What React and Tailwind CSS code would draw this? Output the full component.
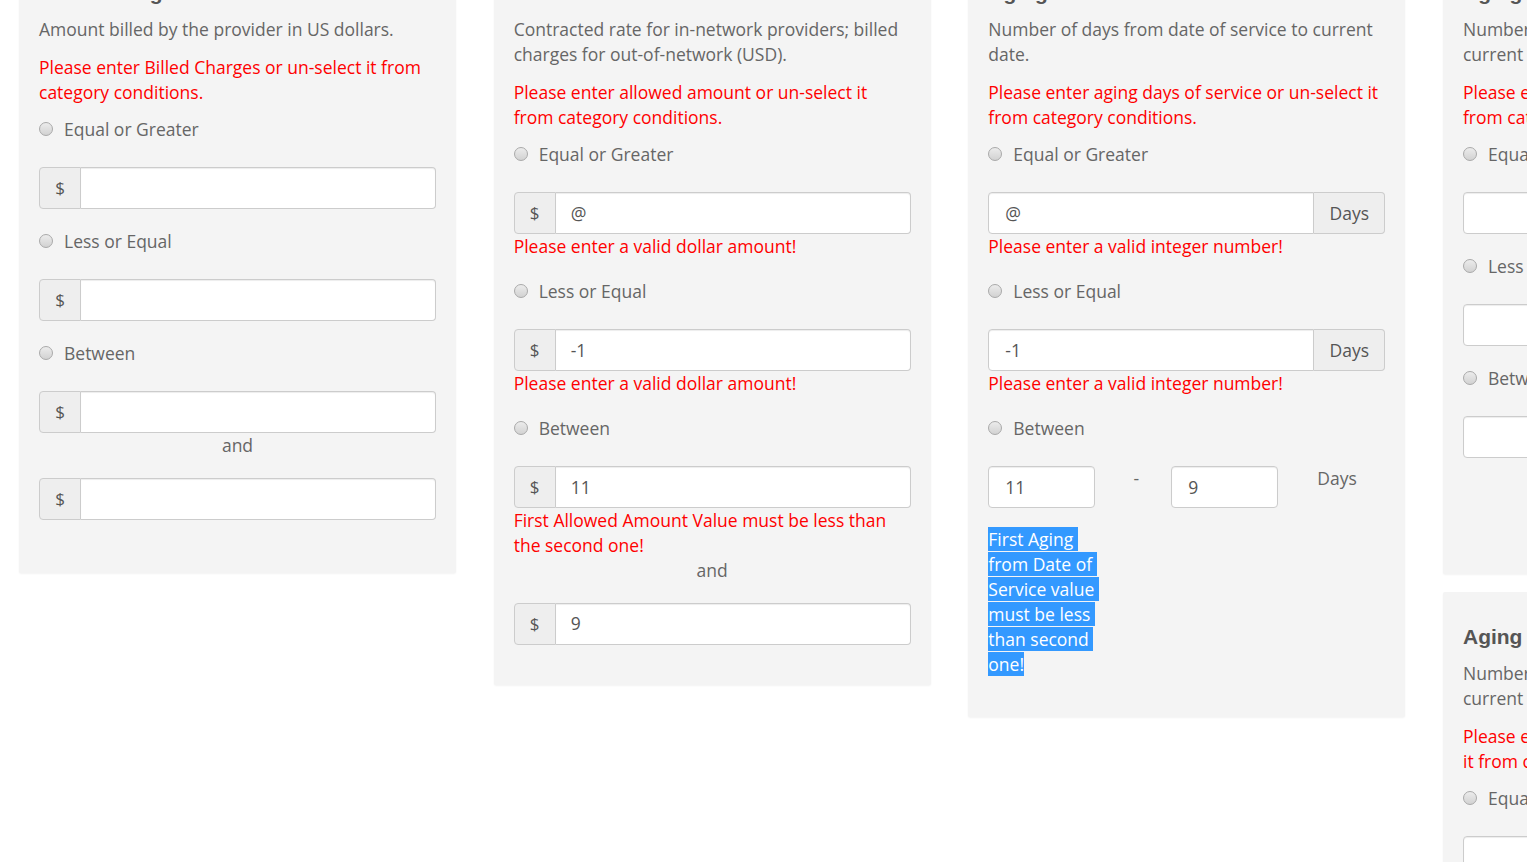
import React from "react";

const Radio = ({ label, className = "" }) => (
  <div className={"flex items-center h-[25px] " + className}>
    <span className="w-[14px] h-[14px] rounded-full border border-[#a9a9a9] bg-linear-to-b from-[#ececec] to-[#d2d2d2] shrink-0" />
    <span className="ml-[11px] leading-[25px]">{label}</span>
  </div>
);

const DollarInput = ({ value = "", className = "" }) => (
  <div className={"flex h-[42px] " + className}>
    <span className="w-[42px] shrink-0 flex items-center justify-center bg-[#eeeeee] border border-[#cccccc] rounded-l-[4px] text-[#555555] text-[17px]">
      $
    </span>
    <div className="flex-1 flex items-center bg-white border border-l-0 border-[#cccccc] rounded-r-[4px] px-[15px] text-[#555555] shadow-[inset_0_1px_1px_rgba(0,0,0,0.075)]">
      {value}
    </div>
  </div>
);

const DaysInput = ({ value = "", className = "" }) => (
  <div className={"flex h-[42px] " + className}>
    <div className="flex-1 flex items-center bg-white border border-[#cccccc] rounded-l-[4px] px-4 text-[#555555] shadow-[inset_0_1px_1px_rgba(0,0,0,0.075)]">
      {value}
    </div>
    <span className="w-[71px] shrink-0 flex items-center justify-center bg-[#eeeeee] border border-l-0 border-[#cccccc] rounded-r-[4px] text-[#555555]">
      Days
    </span>
  </div>
);

const SmallInput = ({ value = "" }) => (
  <div className="w-[107px] h-[42px] shrink-0 flex items-center bg-white border border-[#cccccc] rounded-[4px] px-4 text-[#555555] shadow-[inset_0_1px_1px_rgba(0,0,0,0.075)]">
    {value}
  </div>
);

const Card = ({ children, className = "" }) => (
  <div
    className={
      "w-[437px] shrink-0 bg-[#f4f4f4] px-5 pt-[33px] rounded-[2px] shadow-[0_1px_2px_rgba(0,0,0,0.05)] " +
      className
    }
  >
    {children}
  </div>
);

const Heading = ({ children }) => (
  <h4 className="font-['Liberation_Sans',Arial,sans-serif] font-bold text-[21px] leading-[23px] text-[#555555] whitespace-nowrap">
    {children}
  </h4>
);

const Desc = ({ children }) => <p className="mt-[12.5px] leading-[25px]">{children}</p>;
const Err = ({ children, className = "" }) => (
  <p className={"leading-[25px] text-[#ff0000] " + className}>{children}</p>
);

export default function App() {
  return (
    <div className="w-[1527px] h-[862px] overflow-hidden bg-white font-['Open_Sans',sans-serif] text-[17.5px] text-[#666666]">
      <div className="flex items-start gap-[37.67px] pl-[19px] mt-[-52px]">
        {/* Card 1 */}
        <Card className="pb-[53.5px]">
          <Heading>Billed Charges</Heading>
          <Desc>Amount billed by the provider in US dollars.</Desc>
          <Err className="mt-[13px]">Please enter Billed Charges or un-select it from category conditions.</Err>
          <Radio label="Equal or Greater" className="mt-[12px]" />
          <DollarInput className="mt-[25.5px]" />
          <Radio label="Less or Equal" className="mt-[19.5px]" />
          <DollarInput className="mt-[25.5px]" />
          <Radio label="Between" className="mt-[19.5px]" />
          <DollarInput className="mt-[25.5px]" />
          <p className="text-center leading-[25px]">and</p>
          <DollarInput className="mt-[19.5px]" />
        </Card>

        {/* Card 2 */}
        <Card className="pb-[40.5px]">
          <Heading>Allowed Amount</Heading>
          <Desc>Contracted rate for in-network providers; billed charges for out-of-network (USD).</Desc>
          <Err className="mt-[13px]">Please enter allowed amount or un-select it from category conditions.</Err>
          <Radio label="Equal or Greater" className="mt-[12px]" />
          <DollarInput value="@" className="mt-[25.5px]" />
          <Err>Please enter a valid dollar amount!</Err>
          <Radio label="Less or Equal" className="mt-[19.5px]" />
          <DollarInput value="-1" className="mt-[25.5px]" />
          <Err>Please enter a valid dollar amount!</Err>
          <Radio label="Between" className="mt-[19.5px]" />
          <DollarInput value="11" className="mt-[25.5px]" />
          <Err>First Allowed Amount Value must be less than the second one!</Err>
          <p className="text-center leading-[25px]">and</p>
          <DollarInput value="9" className="mt-[19.5px]" />
        </Card>

        {/* Card 3 */}
        <Card className="pb-[40px]">
          <Heading>Aging from Date of Service</Heading>
          <Desc>Number of days from date of service to current date.</Desc>
          <Err className="mt-[13px]">Please enter aging days of service or un-select it from category conditions.</Err>
          <Radio label="Equal or Greater" className="mt-[12px]" />
          <DaysInput value="@" className="mt-[25.5px]" />
          <Err>Please enter a valid integer number!</Err>
          <Radio label="Less or Equal" className="mt-[19.5px]" />
          <DaysInput value="-1" className="mt-[25.5px]" />
          <Err>Please enter a valid integer number!</Err>
          <Radio label="Between" className="mt-[19.5px]" />
          <div className="mt-[25.5px] flex items-start">
            <SmallInput value="11" />
            <span className="w-[76px] pl-[6px] text-center leading-[25px]">-</span>
            <SmallInput value="9" />
            <span className="ml-[39px] leading-[25px]">Days</span>
          </div>
          <p className="mt-[18.5px] w-[114px] leading-[25px] whitespace-break-spaces">
            <span className="bg-[#3399ff] text-white">First Aging from Date of Service value must be less than second one!</span>
          </p>
        </Card>

        {/* Column 4 */}
        <div className="flex flex-col gap-[18.5px] shrink-0">
          <Card className="pb-[115.5px]">
            <Heading>Aging from Last Bill Date</Heading>
            <Desc>Number of days from the last billing date to current date.</Desc>
            <Err className="mt-[13px]">Please enter aging days of last bill or un-select it from category conditions.</Err>
            <Radio label="Equal or Greater" className="mt-[12px]" />
            <DaysInput className="mt-[25.5px]" />
            <Radio label="Less or Equal" className="mt-[19.5px]" />
            <DaysInput className="mt-[25.5px]" />
            <Radio label="Between" className="mt-[19.5px]" />
            <DaysInput className="mt-[25.5px]" />
          </Card>
          <Card className="pb-[40px]">
            <Heading>Aging from Date of Payment</Heading>
            <Desc>Number of days from date of payment to current date.</Desc>
            <Err className="mt-[13px]">Please enter aging days of payment or un-select it from category conditions.</Err>
            <Radio label="Equal or Greater" className="mt-[12px]" />
            <DaysInput className="mt-[25.5px]" />
            <Radio label="Less or Equal" className="mt-[19.5px]" />
            <DaysInput className="mt-[25.5px]" />
          </Card>
        </div>
      </div>
    </div>
  );
}
